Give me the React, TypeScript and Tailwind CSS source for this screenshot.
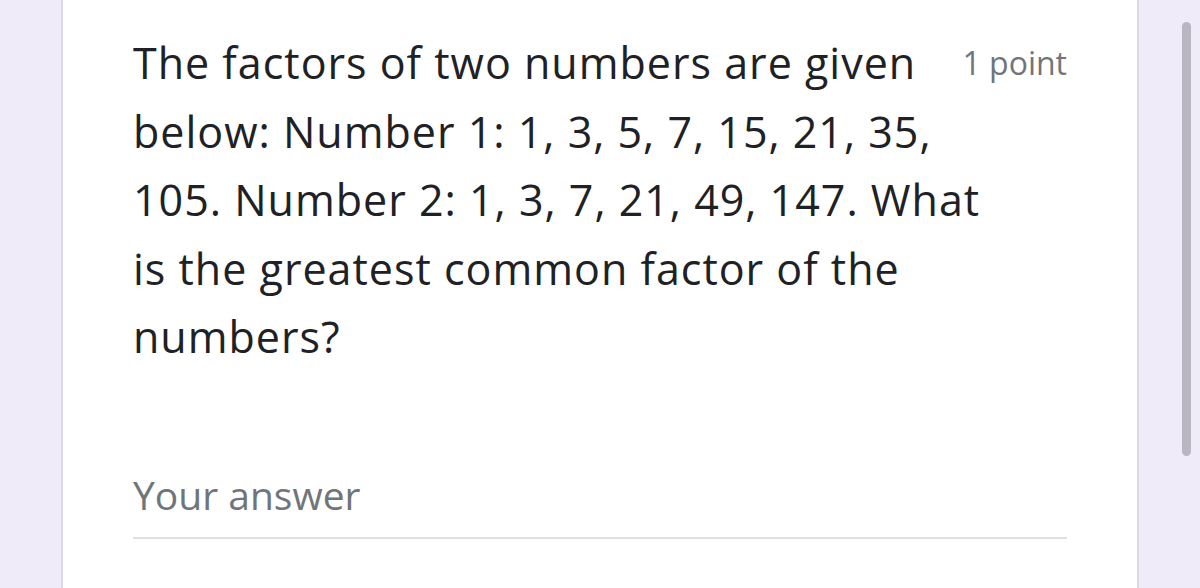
const questionLines = [
  "The factors of two numbers are given",
  "below: Number 1: 1, 3, 5, 7, 15, 21, 35,",
  "105. Number 2: 1, 3, 7, 21, 49, 147. What",
  "is the greatest common factor of the",
  "numbers?",
];

export default function App() {
  return (
    <div className="flex h-[588px] w-[1200px] overflow-hidden bg-[#f0ebf8]" style={{ fontFamily: "'Open Sans', Arial, sans-serif" }}>
      <div className="ml-[61px] w-[1078px] shrink-0 border-x-2 border-[#dcd9e2] bg-white pl-[70px] pr-[70px] pt-[29px]">
        <div className="flex items-start">
          <p className="min-w-0 flex-1 text-[43px] leading-[68.5px] tracking-[1px] text-[#202124]">
            {questionLines.map((line) => (
              <span key={line} className="block whitespace-nowrap">
                {line}
              </span>
            ))}
          </p>
          <span className="ml-6 mt-[14px] shrink-0 whitespace-nowrap text-[32px] leading-[40px] text-[#70757a]">1 point</span>
        </div>
        <div className="mt-[99px] border-b-2 border-[#e0e0e0] pb-[18px] text-[39px] leading-[48px] text-[#70757a]">
          Your answer
        </div>
      </div>
      <div className="flex flex-1 justify-end pr-[9px] pt-[22px]">
        <div className="h-[434px] w-[9px] rounded-full bg-[#b9b6c2]" />
      </div>
    </div>
  );
}
